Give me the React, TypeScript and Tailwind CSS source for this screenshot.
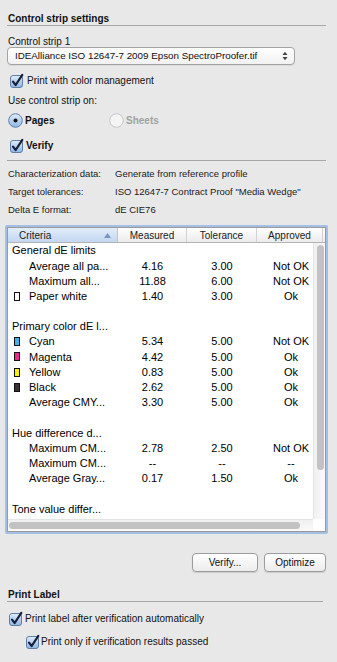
import React from "react";

type Row = {
  kind: "group" | "item" | "blank";
  label?: string;
  sw?: string;
  m?: string;
  t?: string;
  a?: string;
};

const rows: Row[] = [
  { kind: "group", label: "General dE limits" },
  { kind: "item", label: "Average all pa...", m: "4.16", t: "3.00", a: "Not OK" },
  { kind: "item", label: "Maximum all...", m: "11.88", t: "6.00", a: "Not OK" },
  { kind: "item", label: "Paper white", sw: "#ffffff", m: "1.40", t: "3.00", a: "Ok" },
  { kind: "blank" },
  { kind: "group", label: "Primary color dE l..." },
  { kind: "item", label: "Cyan", sw: "#3fb2ea", m: "5.34", t: "5.00", a: "Not OK" },
  { kind: "item", label: "Magenta", sw: "#ea2a8e", m: "4.42", t: "5.00", a: "Ok" },
  { kind: "item", label: "Yellow", sw: "#f7f000", m: "0.83", t: "5.00", a: "Ok" },
  { kind: "item", label: "Black", sw: "#3a3232", m: "2.62", t: "5.00", a: "Ok" },
  { kind: "item", label: "Average CMY...", m: "3.30", t: "5.00", a: "Ok" },
  { kind: "blank" },
  { kind: "group", label: "Hue difference d..." },
  { kind: "item", label: "Maximum CM...", m: "2.78", t: "2.50", a: "Not OK" },
  { kind: "item", label: "Maximum CM...", m: "--", t: "--", a: "--" },
  { kind: "item", label: "Average Gray...", m: "0.17", t: "1.50", a: "Ok" },
  { kind: "blank" },
  { kind: "group", label: "Tone value differ..." },
];

const CheckBox = () => (
  <svg width="14" height="14" viewBox="0 0 14 14" className="shrink-0 overflow-visible">
    <defs>
      <linearGradient id="cbfill" x1="0" y1="0" x2="0" y2="1">
        <stop offset="0" stopColor="#e2edf9" />
        <stop offset="1" stopColor="#8cb5e5" />
      </linearGradient>
    </defs>
    <rect x="0.5" y="1.5" width="12" height="12" rx="2.5" fill="url(#cbfill)" stroke="#5f7fa6" />
    <path d="M3 7.6 L5.7 11 L12.3 0.8" fill="none" stroke="#15203a" strokeWidth="2.2" strokeLinecap="round" strokeLinejoin="round" />
  </svg>
);

const Radio = ({ on }: { on: boolean }) => (
  <svg width="15" height="15" viewBox="0 0 15 15" className="shrink-0">
    <defs>
      <linearGradient id="rdfill" x1="0" y1="0" x2="0" y2="1">
        <stop offset="0" stopColor="#e2edf9" />
        <stop offset="1" stopColor="#8cb5e5" />
      </linearGradient>
    </defs>
    {on ? (
      <>
        <circle cx="7.5" cy="7.5" r="6.8" fill="url(#rdfill)" stroke="#5f7fa6" />
        <circle cx="7.5" cy="7.5" r="2" fill="#111" />
      </>
    ) : (
      <circle cx="7.5" cy="7.5" r="6.8" fill="#f4f4f4" stroke="#c6c6c6" />
    )}
  </svg>
);

const Swatch = ({ color }: { color: string }) => (
  <span className="block w-[6px] h-[9px] border border-[#111]" style={{ backgroundColor: color }} />
);

export default function App() {
  return (
    <div className="w-[337px] h-[662px] overflow-hidden bg-[#e8e8e8] pl-[7px] pr-[11px] pt-[12px] font-['Liberation_Sans',Arial,sans-serif] text-[#111]">
      <div className="h-[12px] flex items-center pl-px text-[10px] font-bold">Control strip settings</div>
      <div className="mt-[1px] h-px bg-[#a6a6a6]" />

      <div className="mt-[9px] h-[12px] flex items-center pl-px text-[10px]">Control strip 1</div>
      <div className="h-[18px] w-[288px] flex items-center justify-between rounded-[4px] border border-[#a3a3a3] bg-gradient-to-b from-white to-[#f1f1f1] pl-[7px] pr-[6px] text-[9.8px] shadow-[0_1px_0_rgba(0,0,0,0.06)]">
        <span>IDEAlliance ISO 12647-7 2009 Epson SpectroProofer.tif</span>
        <svg width="6" height="10" viewBox="0 0 6 10">
          <path d="M0.5 4 L3 0.8 L5.5 4 Z" fill="#444" />
          <path d="M0.5 6 L3 9.2 L5.5 6 Z" fill="#444" />
        </svg>
      </div>

      <div className="mt-[9px] h-[13px] flex items-center gap-[3px] ml-[3px] text-[10px]">
        <CheckBox />
        <span>Print with color management</span>
      </div>

      <div className="mt-[7px] h-[12px] flex items-center pl-px text-[10px]">Use control strip on:</div>

      <div className="mt-[7px] h-[14px] flex items-center text-[10px]">
        <div className="w-[101px] flex items-center gap-[2px] ml-px">
          <Radio on />
          <span className="font-bold">Pages</span>
        </div>
        <div className="flex items-center gap-[2px] text-[#a2a2a2]">
          <Radio on={false} />
          <span className="font-bold">Sheets</span>
        </div>
      </div>

      <div className="mt-[12px] h-[13px] flex items-center gap-[2px] ml-[3px] text-[10px]">
        <CheckBox />
        <span className="font-bold">Verify</span>
      </div>

      <div className="mt-[8px] h-px bg-[#a6a6a6]" />

      <div className="text-[9.5px] text-[#1a1a1a]">
        <div className="mt-[7px] h-[12px] flex items-center pl-px">
          <span className="w-[107px]">Characterization data:</span>
          <span>Generate from reference profile</span>
        </div>
        <div className="mt-[6px] h-[12px] flex items-center pl-px">
          <span className="w-[107px]">Target tolerances:</span>
          <span>ISO 12647-7 Contract Proof "Media Wedge"</span>
        </div>
        <div className="mt-[6px] h-[12px] flex items-center pl-px">
          <span className="w-[107px]">Delta E format:</span>
          <span>dE CIE76</span>
        </div>
      </div>

      {/* table */}
      <div className="mt-[9px] -ml-[2px] w-[323px] border-2 border-[#a3bfe6] rounded-[2px]">
        <div className="border border-[#9a9a9a] bg-white">
          <div className="h-[15px] flex text-[10px] text-[#222] border-b border-[#b4b4b4] bg-gradient-to-b from-white to-[#ebebeb]">
            <div className="w-[110px] flex items-center justify-between pl-[11px] pr-[6px] bg-gradient-to-b from-[#e3edf9] to-[#c3d7f0] border-r border-[#c4c4c4]">
              <span>Criteria</span>
              <svg width="7" height="5" viewBox="0 0 7 5">
                <path d="M0 5 L3.5 0 L7 5 Z" fill="#7a96bf" />
              </svg>
            </div>
            <div className="w-[69px] flex items-center justify-center border-r border-[#d2d2d2]">Measured</div>
            <div className="w-[70px] flex items-center justify-center border-r border-[#d2d2d2]">Tolerance</div>
            <div className="w-[66px] flex items-center justify-center border-r border-[#d2d2d2]">Approved</div>
          </div>

          <div className="relative h-[276px] overflow-hidden">
            <div className="text-[11px] text-black">
              {rows.map((r, i) => (
                <div key={i} className="h-[15.2px] flex items-center whitespace-nowrap">
                  {r.kind === "group" && <div className="pl-[4px]">{r.label}</div>}
                  {r.kind === "item" && (
                    <>
                      <div className="w-[110px] flex items-center">
                        <div className="w-[21px] pl-[6px] flex items-center">{r.sw && <Swatch color={r.sw} />}</div>
                        <span>{r.label}</span>
                      </div>
                      <div className="w-[69px] text-center">{r.m}</div>
                      <div className="w-[70px] text-center">{r.t}</div>
                      <div className="w-[68px] text-center">{r.a}</div>
                    </>
                  )}
                </div>
              ))}
            </div>
            {/* vertical scrollbar */}
            <div className="absolute right-0 top-0 bottom-0 w-[12px] bg-gradient-to-r from-[#f0f0f0] to-[#fafafa] border-l border-[#e4e4e4] pt-[2px] pl-[3px]">
              <div className="h-[225px] w-[7px] rounded-full bg-[#c2c2c2]" />
            </div>
          </div>

          <div className="h-[12px] flex">
            <div className="flex-1 bg-gradient-to-b from-[#f0f0f0] to-[#fafafa] border-t border-[#e4e4e4] pl-px pt-[2px]">
              <div className="h-[7px] w-[291px] rounded-full bg-[#c2c2c2]" />
            </div>
            <div className="w-[12px] bg-white" />
          </div>
        </div>
      </div>

      <div className="mt-[19px] flex justify-end gap-[6px] text-[10px]">
        <button className="h-[19px] w-[66px] rounded-[4px] border border-[#9c9c9c] bg-gradient-to-b from-white to-[#ececec] shadow-[0_1px_1px_rgba(0,0,0,0.12)]">
          Verify...
        </button>
        <button className="h-[19px] w-[62px] rounded-[4px] border border-[#9c9c9c] bg-gradient-to-b from-white to-[#ececec] shadow-[0_1px_1px_rgba(0,0,0,0.12)]">
          Optimize
        </button>
      </div>

      <div className="mt-[17px] h-[11px] flex items-center pl-px text-[10px] font-bold">Print Label</div>
      <div className="mt-[1px] h-px w-[316px] bg-[#a6a6a6]" />

      <div className="mt-[10px] h-[13px] flex items-center gap-[2px] ml-[2px] text-[10px]">
        <CheckBox />
        <span>Print label after verification automatically</span>
      </div>
      <div className="mt-[10px] h-[13px] flex items-center gap-[1px] ml-[19px] text-[10px]">
        <CheckBox />
        <span>Print only if verification results passed</span>
      </div>
    </div>
  );
}
